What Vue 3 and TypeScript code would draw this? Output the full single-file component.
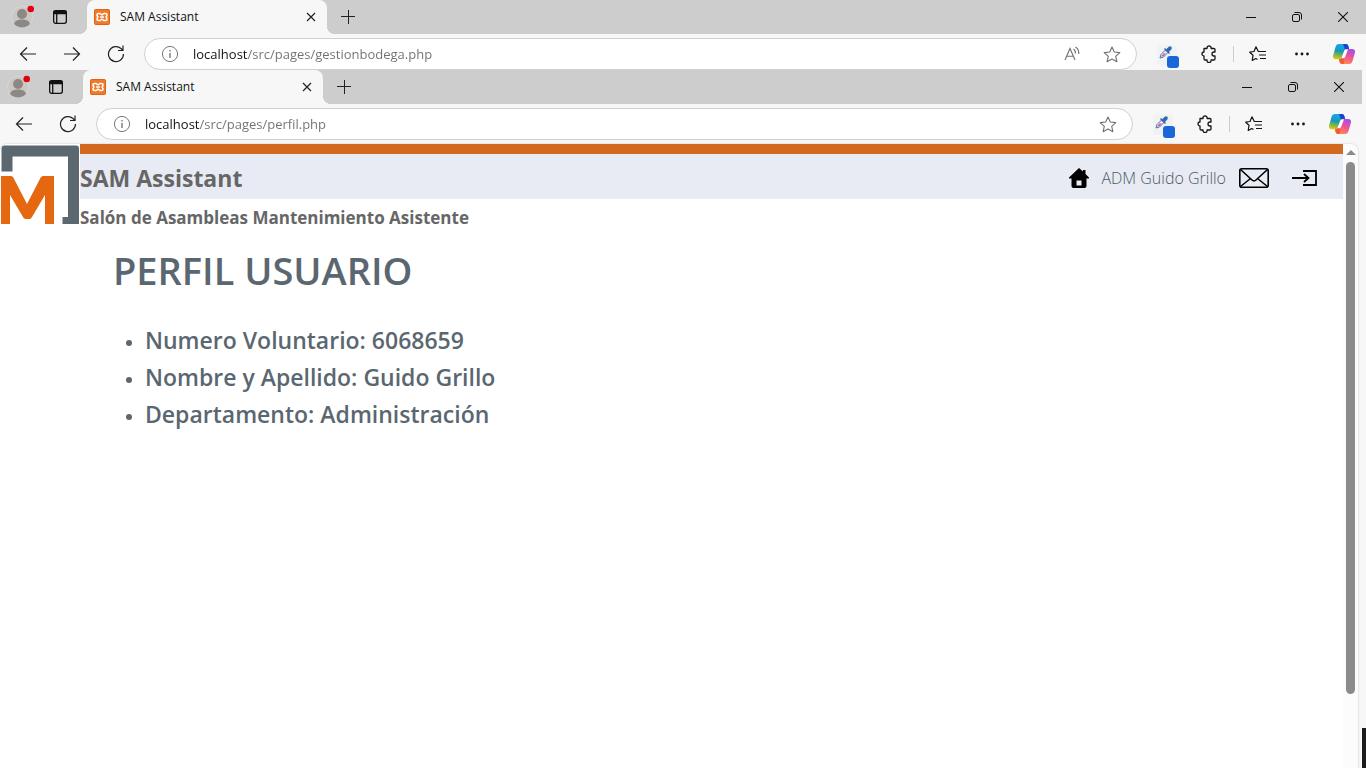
<script setup lang="ts">
import { ref } from 'vue'

interface BrowserWindow {
  id: string
  title: string
  address: string
  canGoForward: boolean
  canReadAloud: boolean
}

interface ProfileField {
  label: string
  value: string
}

const windows = ref<BrowserWindow[]>([
  { id: 'back', title: 'SAM Assistant', address: 'localhost/src/pages/gestionbodega.php', canGoForward: true, canReadAloud: true },
  { id: 'front', title: 'SAM Assistant', address: 'localhost/src/pages/perfil.php', canGoForward: false, canReadAloud: false },
])

const profile: ProfileField[] = [
  { label: 'Numero Voluntario', value: '6068659' },
  { label: 'Nombre y Apellido', value: 'Guido Grillo' },
  { label: 'Departamento', value: 'Administración' },
]
</script>

<template>
  <div class="desktop">
    <div v-for="win in windows" :key="win.id" class="chrome" :class="win.id">
      <div class="tab-strip">
        <button class="avatar" aria-label="Profile">
          <svg width="24" height="28" viewBox="0 0 24 28">
            <circle cx="12" cy="14" r="10.5" fill="#cbc8c4" stroke="#d9d7d2" />
            <circle cx="12" cy="11" r="5" fill="#8b8885" />
            <path d="M4 21c1-3.400 4-4.500 8-4.500s7 1.100 8 4.500c-2 2.300-5 3.500-8 3.500S6 23.300 4 21z" fill="#8b8885" />
            <circle cx="20.700" cy="6" r="3.300" fill="#e3000f" />
          </svg>
        </button>
        <button class="panes" aria-label="Tab actions">
          <svg width="16" height="16" viewBox="0 0 16 16" fill="none" stroke="#111" stroke-width="1.300">
            <rect x="1.650" y="1.650" width="12.700" height="12.700" rx="2" />
            <path d="M1.500 3.500h13" stroke-width="3.500" />
            <path d="M4.700 5v9" />
          </svg>
        </button>
        <div class="tab">
          <svg class="favicon" width="16" height="16" viewBox="0 0 16 16">
            <rect x=".5" y=".5" width="15" height="15" rx="1" fill="#f07a2a" stroke="#dd6416" />
            <path d="M4.500 4.500h1.700L8 6l1.800-1.500h1.700q1.500 0 1.500 1.500 0 1.200-1 2 1 .8 1 2 0 1.500-1.500 1.500H9.800L8 10l-1.800 1.500H4.500Q3 11.500 3 10q0-1.200 1-2-1-.8-1-2 0-1.500 1.500-1.500zM6 8h4" fill="none" stroke="#fff" stroke-width="1.600" stroke-linejoin="round" />
          </svg>
          <span class="tab-title">{{ win.title }}</span>
          <button class="tab-close" aria-label="Close tab">
            <svg width="10" height="10" viewBox="0 0 10 10" stroke="#222" stroke-width="1.200"><path d="M1 1l8 8M9 1L1 9" /></svg>
          </button>
        </div>
        <button class="new-tab" aria-label="New tab">
          <svg width="14" height="14" viewBox="0 0 14 14" stroke="#222"><path d="M7.500 0v14M0 6.500h14" /></svg>
        </button>
        <div class="window-buttons">
          <button aria-label="Minimize"><svg width="10" height="10" viewBox="0 0 10 10" stroke="#111"><path d="M0 5.500h10" /></svg></button>
          <button aria-label="Restore">
            <svg width="10" height="10" viewBox="0 0 10 10" fill="none" stroke="#111">
              <rect x=".5" y="2.500" width="7" height="7" rx="1.500" />
              <path d="M2.500 .5H7a2.500 2.500 0 0 1 2.500 2.500v4.500" />
            </svg>
          </button>
          <button aria-label="Close"><svg width="10" height="10" viewBox="0 0 10 10" stroke="#111" stroke-width="1.100"><path d="M0 0l10 10M10 0L0 10" /></svg></button>
        </div>
      </div>

      <div class="toolbar">
        <button class="tool" aria-label="Back">
          <svg width="18" height="16" viewBox="0 0 18 16" fill="none" stroke="#222" stroke-width="1.200"><path d="M8 1.500L1.500 8 8 14.500M1.500 8H17" /></svg>
        </button>
        <button v-if="win.canGoForward" class="tool" aria-label="Forward">
          <svg width="18" height="16" viewBox="0 0 18 16" fill="none" stroke="#222" stroke-width="1.200"><path d="M10 1.500L16.500 8 10 14.500M16.500 8H1" /></svg>
        </button>
        <button class="tool" aria-label="Reload">
          <svg width="18" height="18" viewBox="0 0 18 18" fill="none" stroke="#222" stroke-width="1.200"><path d="M16.500 9A7.500 7.500 0 1 1 14 3.500l1.800 1.700M16 .5v5h-5" /></svg>
        </button>
        <div class="address">
          <svg class="info" width="18" height="18" viewBox="0 0 18 18" fill="none" stroke="#777">
            <circle cx="9" cy="9" r="7.600" /><path d="M9 8v5M9 5v1.500" stroke-width="1.400" />
          </svg>
          <input v-model="win.address" type="text" aria-label="Address" spellcheck="false" />
          <button v-if="win.canReadAloud" class="in-field" aria-label="Read aloud">
            <svg width="18" height="16" viewBox="0 0 18 16" fill="none" stroke="#707070" stroke-width="1.100">
              <path d="M2 14L7 2.500 12 14M3.800 10.200h6.400M10.500 3q2 1.500 2 4.500M12.500 1q3.800 2.500 3.200 7" />
            </svg>
          </button>
          <button class="in-field" aria-label="Add to favourites">
            <svg width="18" height="17" viewBox="0 0 18 17" fill="none" stroke="#707070" stroke-width="1.100" stroke-linejoin="round">
              <path d="M9 1l2.300 5 5.500.6-4.100 3.700 1.200 5.400L9 13l-4.900 2.700 1.200-5.400L1.200 6.600 6.700 6z" />
            </svg>
          </button>
        </div>
        <button class="tool dropper" aria-label="Colour picker">
          <svg width="24" height="28" viewBox="0 0 24 28">
            <rect y="5" width="20" height="20" rx="2" fill="#f1f2f3" />
            <path d="M3 18l1-3.500L8.500 10l2.500 2.500L6.500 17z" fill="#e6edf7" stroke="#4a78ae" />
            <path d="M4 16.500l2.500-3H9L6.500 16z" fill="#ee4b98" />
            <path d="M7.500 8.500l5 5M10 9.500l2-2c1.200-1.200 2.800.4 1.600 1.600l-2 2z" fill="#3468b4" stroke="#3468b4" stroke-width="1.500" />
            <rect x="10" y="16" width="12" height="12" rx="3" fill="#1967d8" />
          </svg>
        </button>
        <button class="tool" aria-label="Extensions">
          <svg width="18" height="18" viewBox="0 0 18 18" fill="none" stroke="#151515" stroke-width="1.300" stroke-linejoin="round">
            <path d="M3 3.500h3a2.100 2.100 0 1 1 4.100 0h2.700c.8 0 1.200.4 1.200 1.200V7h-1a2 2 0 0 0 0 4h1v2.800c0 .8-.4 1.200-1.200 1.200h-2.700a2.100 2.100 0 1 1-4.100 0H4.200c-.8 0-1.200-.4-1.200-1.200V11a2 2 0 1 1 0-4z" />
          </svg>
        </button>
        <span class="divider"></span>
        <button class="tool" aria-label="Favourites">
          <svg width="18" height="16" viewBox="0 0 18 16" fill="none" stroke="#151515" stroke-width="1.200" stroke-linejoin="round">
            <path d="M10.500 5.500H9.300L7 .8 5 5.500l-4.300.7L4 9.300 3.200 14.500l3.600-2 1.700 1M10.500 5.500H17M10 9h7M11 12.500h6" />
          </svg>
        </button>
        <button class="tool" aria-label="More">
          <svg width="14" height="4" viewBox="0 0 14 4" fill="#151515"><circle cx="1.500" cy="2" r="1.400" /><circle cx="7" cy="2" r="1.400" /><circle cx="12.500" cy="2" r="1.400" /></svg>
        </button>
        <button class="tool copilot" aria-label="Copilot">
          <svg width="22" height="20" viewBox="0 0 22 20">
            <defs>
              <linearGradient :id="`cool-${win.id}`" x1=".4" y1="0" x2=".2" y2="1">
                <stop offset="0" stop-color="#18a7f5" /><stop offset=".45" stop-color="#169ab2" />
                <stop offset=".7" stop-color="#70b657" /><stop offset="1" stop-color="#f6c800" />
              </linearGradient>
              <linearGradient :id="`warm-${win.id}`" x1=".8" y1="0" x2=".4" y2="1">
                <stop offset="0" stop-color="#a04df0" /><stop offset=".5" stop-color="#ee5299" /><stop offset="1" stop-color="#ff8b4a" />
              </linearGradient>
            </defs>
            <path d="M6 0h7c1.500 0 2 1 2.500 2.500L16 5h-2c-2 0-2.500 1-3 2.500L9 13c-.6 1.700-1.300 2.300-3 2.300H3c-2.500 0-3.500-1.500-2.800-4L2.500 3C3.100 1 4 0 6 0z" :fill="`url(#cool-${win.id})`" />
            <path d="M10 0h3c1.500 0 2 1 2.500 2.500L16 5h-2c-1 0-1.600.3-2 .8z" fill="#1745cc" />
            <path d="M16 20H9c-1.500 0-2-1-2.500-2.500L6 15c2 0 2.500-.5 3-2l2-5.500c.5-1.700 1-2.500 3-2.500h5c2.500 0 3.500 1.500 2.800 4L19.500 17c-.6 2-1.500 3-3.500 3z" :fill="`url(#warm-${win.id})`" />
            <path d="M6 15.300c1.700 0 2.400-.6 3-2.300l.5-1 2 4L10.500 20H9c-1.500 0-2-1-2.500-2.500z" fill="#f25c35" />
            <path d="M11 7.500c.5-1.500 1-2.200 3-2.200h1L12.500 12c-.5 1.700-1.300 2.300-3 2.300H8.400z" fill="#fff" />
          </svg>
        </button>
      </div>
    </div>

    <div class="lower">
      <div class="viewport">
        <main class="page">
          <header class="site-header">
            <svg class="logo" width="80" height="80" viewBox="0 0 80 80">
              <rect width="80" height="80" fill="#fff" />
              <path d="M4 1.500h72q3 0 3 3V80H62.500V73H68V12.500H12.500V27.500H1.500V4.500q0-3 2.500-3z" fill="#5b6870" />
              <path d="M1 80V32h10q1.500 0 2.300 1.500L27 60l13.700-26.500Q41.500 32 43 32h11v48H45V51L32 73q-1 2-2.500 2h-4q-1.500 0-2.500-2L10 51v29z" fill="#e5670f" />
            </svg>
            <div class="banner">
              <h2>SAM Assistant</h2>
              <nav>
                <a href="#" aria-label="Inicio">
                  <svg width="20" height="20" viewBox="0 0 20 20"><path d="M10 0l4 3.500V2h2.500v4L20 9.500v1h-2.500V18q0 2-2 2h-11q-2 0-2-2v-7.500H0v-1zM7.500 12.500v5h5v-5z" fill="#000" fill-rule="evenodd" /></svg>
                </a>
                <a class="user" href="#">ADM Guido Grillo</a>
                <a class="mail" href="#" aria-label="Mensajes">
                  <svg width="30" height="20" viewBox="0 0 30 20" fill="none" stroke="#000" stroke-width="1.600"><rect x=".8" y=".8" width="28.400" height="18.400" rx="2" /><path d="M1.500 1.500L13 12q2 1.800 4 0L28.500 1.500M1.500 18.500l10-8M28.500 18.500l-10-8" /></svg>
                </a>
                <a class="logout" href="#" aria-label="Salir">
                  <svg width="26" height="18" viewBox="0 0 26 18" fill="none" stroke="#000" stroke-width="1.800"><path d="M0 9h16M12 5l4.500 4-4.500 4M11 2h13v14H11" /></svg>
                </a>
              </nav>
            </div>
            <h3>Salón de Asambleas Mantenimiento Asistente</h3>
          </header>
          <section class="profile">
            <h1>PERFIL USUARIO</h1>
            <ul>
              <li v-for="field in profile" :key="field.label">{{ field.label }}: {{ field.value }}</li>
            </ul>
          </section>
        </main>
        <div class="scrollbar" aria-hidden="true">
          <span class="arrow"></span>
          <span class="thumb"></span>
        </div>
      </div>
      <div class="edge"></div>
    </div>
  </div>
</template>

<style>
body {
  margin: 0;
}
</style>

<style scoped>
.desktop {
  display: flex;
  flex-direction: column;
  height: 100vh;
  overflow: hidden;
  background: #f7f7f7;
  font-family: "Segoe UI", "Open Sans", "Noto Sans", sans-serif;
}
button {
  display: flex;
  align-items: center;
  justify-content: center;
  padding: 0;
  border: 0;
  background: none;
}
svg {
  display: block;
  flex: none;
}
.chrome {
  flex: none;
  --inset: 0px;
}
.chrome.front {
  --inset: 4px;
  margin-right: 4px;
}
.tab-strip {
  display: flex;
  align-items: center;
  height: 34px;
  padding-left: calc(10px - var(--inset));
  background: #cdcdcd;
}
.avatar {
  width: 24px;
  height: 28px;
}
.panes {
  width: 16px;
  height: 28px;
  margin-left: 18px;
}
.tab {
  position: relative;
  display: flex;
  align-items: center;
  box-sizing: border-box;
  width: 240px;
  height: 34px;
  margin-left: 19px;
  padding: 0 10px 0 7px;
  border-radius: 8px 8px 0 0;
  background: #f7f7f7;
}
.tab::before,
.tab::after {
  content: "";
  position: absolute;
  bottom: 0;
  width: 8px;
  height: 8px;
}
.tab::before {
  right: 100%;
  background: radial-gradient(circle at 0 0, transparent 8px, #f7f7f7 8px);
}
.tab::after {
  left: 100%;
  background: radial-gradient(circle at 100% 0, transparent 8px, #f7f7f7 8px);
}
.tab-title {
  flex: 1;
  margin-left: 10px;
  font-size: 12px;
  line-height: 16px;
  color: #111;
}
.tab-close {
  width: 12px;
  height: 16px;
}
.new-tab {
  width: 28px;
  height: 28px;
  margin-left: 7px;
}
.window-buttons {
  display: flex;
  margin-left: auto;
}
.window-buttons button {
  width: 46px;
  height: 34px;
}
.toolbar {
  display: flex;
  align-items: center;
  box-sizing: border-box;
  height: 40px;
  padding: 0 2px 0 calc(6px - var(--inset));
  background: #f7f7f7;
}
.back .toolbar {
  height: 36px;
  padding-top: 4px;
}
.tool {
  flex: none;
  width: 44px;
  height: 32px;
}
.address {
  display: flex;
  flex: 1;
  align-items: center;
  box-sizing: border-box;
  min-width: 0;
  height: 32px;
  margin: 0 9px 0 6px;
  padding: 0 4px 0 16px;
  border: 1px solid #d0d0d0;
  border-radius: 16px;
  background: #fff;
}
.address input {
  flex: 1;
  min-width: 0;
  height: 24px;
  margin-left: 14px;
  padding: 0;
  border: 0;
  outline: 0;
  font-family: inherit;
  font-size: 13px;
  color: #707070;
  background: linear-gradient(90deg, #111 55px, #707070 55px);
  -webkit-background-clip: text;
  background-clip: text;
  -webkit-text-fill-color: transparent;
}
.in-field {
  width: 40px;
  height: 28px;
}
.dropper {
  width: 42px;
  padding-left: 4px;
}
.divider {
  flex: none;
  width: 1px;
  height: 16px;
  margin: 0 2px 0 1px;
  background: #cdcdcd;
}
.copilot {
  width: 40px;
}
.lower {
  display: flex;
  flex: 1;
  min-height: 0;
}
.viewport {
  display: flex;
  flex: 1;
  min-width: 0;
  margin-right: 4px;
  border-radius: 8px 8px 0 0;
  overflow: hidden;
  background: #fff;
  box-shadow: 0 0 2px #bbb;
}
.page {
  flex: 1;
  min-width: 0;
  color: #5b6770;
}
.site-header {
  display: grid;
  grid-template-columns: 80px 1fr;
  grid-template-rows: 55px auto;
}
.logo {
  grid-row: 1 / 3;
}
.banner {
  display: flex;
  align-items: center;
  justify-content: space-between;
  padding: 2px 25px 0 0;
  border-top: 10px solid #d2691e;
  background: #e8ebf3;
}
h1,
h2,
h3,
ul {
  margin: 0;
}
h2 {
  font-size: 23px;
  line-height: 32px;
  font-weight: 700;
  color: #666;
}
h3 {
  padding-top: 7px;
  font-size: 17px;
  line-height: 24px;
  font-weight: 700;
  color: #666;
}
nav {
  display: flex;
  align-items: center;
}
nav a {
  color: #4f5962;
  text-decoration: none;
}
.user {
  margin-left: 12px;
  font-size: 16px;
  line-height: 24px;
  font-weight: 300;
}
.mail {
  margin-left: 13px;
}
.logout {
  margin-left: 23px;
}
.profile {
  padding: 14px 0 0 113px;
}
h1 {
  font-size: 38px;
  line-height: 52px;
  font-weight: 600;
}
ul {
  padding: 26px 0 0 32px;
}
li {
  font-size: 23px;
  line-height: 37px;
  font-weight: 600;
}
li::marker {
  font-size: 18px;
}
.scrollbar {
  display: flex;
  flex-direction: column;
  align-items: center;
  width: 15px;
  background: #fcfcfc;
}
.arrow {
  margin-top: 6px;
  border: 5px solid transparent;
  border-top: 0;
  border-bottom-color: #8b8b8b;
}
.thumb {
  flex: 1;
  width: 9px;
  margin: 7px 0 74px;
  border-radius: 5px;
  background: #8b8b8b;
}
.edge {
  display: flex;
  flex-direction: column;
  justify-content: flex-end;
  width: 4px;
}
.edge::after {
  content: "";
  height: 40px;
  background: #1b1b1b;
}
</style>
